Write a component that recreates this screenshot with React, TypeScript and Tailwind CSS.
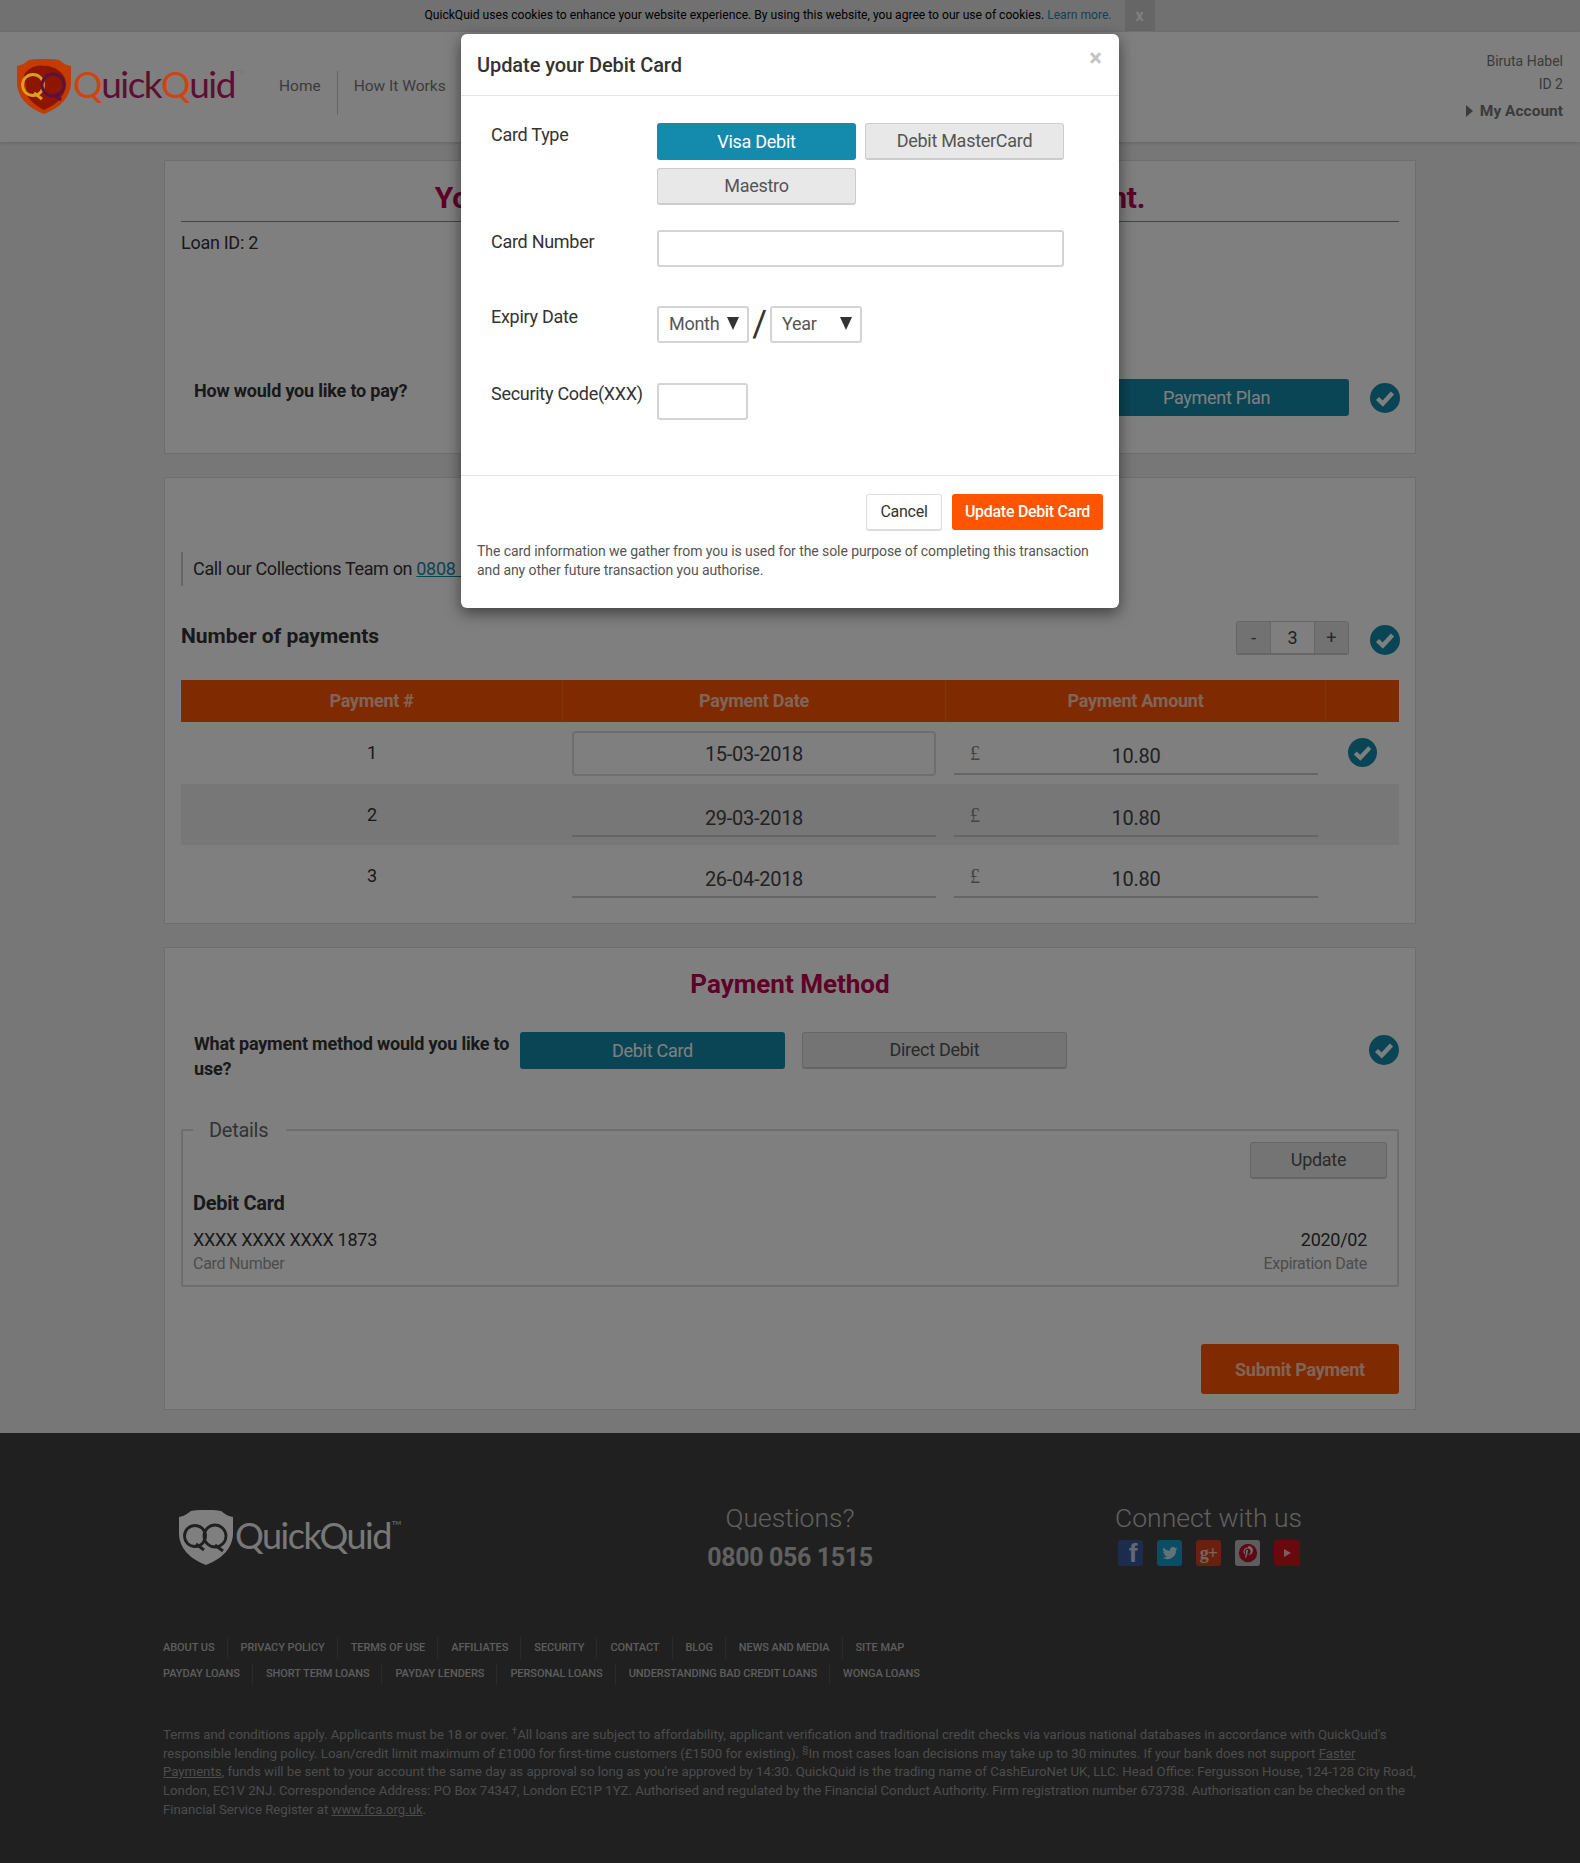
import React from "react";

const font = { fontFamily: "Roboto, sans-serif" };

function Check({ className }: { className: string }) {
  return (
    <svg viewBox="0 0 30 30" className={className}>
      <circle cx="15" cy="15" r="15" fill="#148aac" />
      <path d="M7.5 15.5 L12.8 20.5 L22.5 10" fill="none" stroke="#ffffff" strokeWidth="4.4" />
    </svg>
  );
}

function Shield({ mono }: { mono?: boolean }) {
  const body = mono ? "#ffffff" : "#c43c02";
  const shade = mono ? "#ffffff" : "#8e1500";
  const q1 = mono ? "#404040" : "#d8a020";
  const q2 = mono ? "#404040" : "#5a1040";
  return (
    <svg viewBox="0 0 56 56" className="h-[56px] w-[56px] shrink-0">
      <path d="M1 7 C7 6 10 3 13 1 C22 -0.5 34 -0.5 43 1 C46 3 49 6 55 7 L55 23 C55 38 44 49 28 55 C12 49 1 38 1 23 Z" fill={body} />
      <path d="M8 16 C12 8 22 5 32 7 C42 9 49 15 50 24 C50 36 42 45 28 51 C20 47 14 42 11 36 Z" fill={shade} />
      <circle cx="17" cy="26" r="10.500" fill="none" stroke={q1} strokeWidth="2.800" />
      <path d="M18 34 L26 40" stroke={q1} strokeWidth="3" />
      <circle cx="37" cy="26" r="11" fill="none" stroke={q2} strokeWidth="2.800" />
      <path d="M37 35 L45 41" stroke={q2} strokeWidth="3" />
    </svg>
  );
}

function Logo() {
  return (
    <div className="flex w-[224px] items-start" style={{ fontFamily: "Lato, sans-serif" }}>
      <Shield />
      <div className="ml-[1px] flex text-[37px] leading-[50px] tracking-[-1.500px]">
        <span className="text-[#cf4510]">Q</span>
        <span className="text-[#5c0f33]">uick</span>
        <span className="text-[#cf4510]">Q</span>
        <span className="text-[#5c0f33]">uid</span>
        <span className="mt-[-12px] ml-[1px] text-[6px] tracking-normal text-[#777]">TM</span>
      </div>
    </div>
  );
}

function Gray({ children, className }: { children: React.ReactNode; className: string }) {
  return (
    <button className={`rounded-[3px] border border-[#ccc] border-b-2 bg-[#e8e8e8] pb-[1px] text-[18px] text-[#555] ${className}`}>
      {children}
    </button>
  );
}

function Teal({ children, className }: { children: React.ReactNode; className: string }) {
  return (
    <button className={`rounded-[3px] bg-[#148aac] pb-[1px] text-[18px] text-white ${className}`}>{children}</button>
  );
}

function AmountCell() {
  return (
    <div className="relative ml-2 mt-[9px] flex h-[44px] w-[364px] items-end justify-center border-b-2 border-[#ccc] pb-[2px] text-[20px] text-[#444]">
      <span className="absolute left-[16px] top-[7px] text-[20px] text-[#888]" style={{ fontFamily: "Liberation Serif, serif" }}>£</span>
      10.80
    </div>
  );
}

const rows = [
  { n: 1, date: "15-03-2018" },
  { n: 2, date: "29-03-2018" },
  { n: 3, date: "26-04-2018" },
];

const nav1 = ["About Us", "Privacy Policy", "Terms of Use", "Affiliates", "Security", "Contact", "Blog", "News and Media", "Site Map"];
const nav2 = ["Payday Loans", "Short Term Loans", "Payday Lenders", "Personal Loans", "Understanding Bad Credit Loans", "Wonga Loans"];

function FooterNav({ items, className }: { items: string[]; className: string }) {
  return (
    <ul className={`flex items-center text-[11px] font-medium uppercase text-[#bbb] ${className}`}>
      {items.map((t, i) => (
        <li
          key={t}
          className={`flex h-[22px] items-center ${i < items.length - 1 ? "mr-[13px] border-r border-[#555] pr-[12px]" : ""}`}
        >
          {t}
        </li>
      ))}
    </ul>
  );
}

function Social() {
  return (
    <div className="mt-[7px] flex justify-between">
      <div className="flex h-[26px] w-[25px] items-end justify-center rounded-[3px] bg-[#3b5998] pl-[5px]">
        <span className="text-[26px] leading-[26px] font-bold text-[#c8d0e4]" style={{ fontFamily: "Liberation Sans, sans-serif" }}>f</span>
      </div>
      <div className="flex h-[26px] w-[25px] items-center justify-center rounded-[3px] bg-[#1a9ac9]">
        <svg viewBox="0 0 24 24" className="h-[18px] w-[18px]" fill="#c8e4f0">
          <path d="M22 5.9c-.7.3-1.5.5-2.4.6.9-.5 1.5-1.3 1.8-2.3-.8.5-1.7.8-2.6 1a4.1 4.1 0 0 0-7 3.7C8.400 8.700 5.400 7.100 3.400 4.600a4.100 4.100 0 0 0 1.300 5.500c-.7 0-1.300-.2-1.900-.5 0 2 1.400 3.700 3.300 4.100-.6.2-1.200.2-1.900.1.500 1.600 2 2.800 3.800 2.900A8.300 8.300 0 0 1 2 18.400 11.700 11.700 0 0 0 20 8c.8-.6 1.500-1.300 2-2.100z" />
        </svg>
      </div>
      <div className="flex h-[26px] w-[25px] items-center justify-center rounded-[3px] bg-[#d2431f]">
        <span className="text-[18px] leading-[22px] font-bold tracking-[-1px] text-[#f0c8b8]" style={{ fontFamily: "Liberation Serif, serif" }}>g+</span>
      </div>
      <div className="flex h-[26px] w-[25px] items-center justify-center rounded-[3px] bg-[#bbb]">
        <svg viewBox="0 0 24 24" className="h-[20px] w-[20px]">
          <circle cx="12" cy="12" r="11" fill="#b8142a" />
          <path d="M12 5.500c-3.600 0-5.500 2.300-5.500 4.800 0 1.200.6 2.600 1.700 3.100.3.100.3 0 .5-.8 0-.2 0-.3-.1-.5-.4-.5-.7-1.100-.7-1.900 0-2 1.500-3.700 3.900-3.700 2.100 0 3.300 1.300 3.300 3 0 2.300-1 4.200-2.500 4.200-.8 0-1.400-.7-1.300-1.500.2-1 .7-2.100.7-2.800 0-.6-.3-1.200-1-1.200-.8 0-1.500.9-1.500 2 0 .7.3 1.200.3 1.200l-1 4.200c-.2.900 0 2.500 0 2.700 0 .1.100.1.200.1.100-.1 1.200-1.500 1.600-2.900l.6-2.400c.3.600 1.200 1.100 2.100 1.100 2.800 0 4.600-2.500 4.600-5.900 0-2.500-2.200-4.800-5.500-4.800z" fill="#ddd" />
        </svg>
      </div>
      <div className="flex h-[26px] w-[26px] items-center justify-center rounded-[3px] bg-[#d0121b]">
        <svg viewBox="0 0 10 10" className="h-[10px] w-[10px]">
          <path d="M2 1 L9 5 L2 9 Z" fill="#eec0c0" />
        </svg>
      </div>
    </div>
  );
}

export default function App() {
  return (
    <div className="relative min-h-[1863px] w-[1580px] bg-[#eeeeee] tracking-[-0.28px] text-[#333]" style={font}>
      {/* cookie bar */}
      <div className="flex h-[32px] justify-center bg-[#e2e2e2] pr-[1px] text-[12.100px] leading-[31px] tracking-normal text-black">
        <span>
          QuickQuid uses cookies to enhance your website experience. By using this website, you agree to our use of cookies.{" "}
          <span className="text-[#148aac]">Learn more.</span>
        </span>
        <span className="ml-[13px] flex h-[31px] w-[30px] items-center justify-center bg-[#cccccc] text-[16px] font-bold text-white">x</span>
      </div>

      {/* header */}
      <header className="flex h-[110px] items-start justify-between bg-white pr-[17px] tracking-normal shadow-[0_1px_3px_rgba(0,0,0,0.15)]">
        <div className="flex">
          <div className="relative z-50 mt-[27px] ml-[16px]">
            <Logo />
          </div>
          <nav className="ml-[39px] mt-[39px] flex text-[15.500px] leading-[31px] text-[#777]">
            <span className="border-r border-[#ccc] pr-[16px]">Home</span>
            <span className="pl-[16px]">How It Works</span>
          </nav>
        </div>
        <div className="mt-[17px] text-right text-[#777]">
          <div className="text-[14px] leading-[24px]">Biruta Habel</div>
          <div className="text-[14px] leading-[23px]">ID 2</div>
          <div className="mt-[2px] flex items-center justify-end text-[15.500px] leading-[26px] font-bold">
            <span className="mr-[7px] h-0 w-0 border-y-[6px] border-l-[7px] border-y-transparent border-l-[#777]" />
            My Account
          </div>
        </div>
      </header>

      <main className="ml-[164px] flex w-[1252px] flex-col pt-[18px]">
        {/* summary */}
        <section className="h-[294px] border border-[#dddddd] bg-white px-[16px]">
          <h1 className="h-[61px] border-b border-[#888] pt-[19px] text-center text-[30px] leading-[36px] font-bold whitespace-nowrap text-[#bc0050]">
            Your loan is now overdue, set up your new repayment.
          </h1>
          <div className="mt-[9px] text-[18px] leading-[24px]">Loan ID: 2</div>
          <div className="mt-[124px] flex items-start">
            <div className="ml-[13px] text-[18px] leading-[24px] font-bold tracking-[-0.2px]">How would you like to pay?</div>
            <Teal className="ml-auto h-[37px] w-[265px]">Payment Plan</Teal>
            <Check className="-mr-[1px] ml-[21px] mt-[4px] h-[30px] w-[30px]" />
          </div>
        </section>

        {/* payment schedule */}
        <section className="mt-[23px] h-[447px] border border-[#dddddd] bg-white px-[16px]">
          <div className="mt-[74px] h-[34px] border-l-2 border-[#ccc] pl-[10px] text-[18px] leading-[34px] tracking-[-0.34px]">
            Call our Collections Team on <span className="text-[#148aac] underline">0808 168 5750</span>
          </div>
          <div className="mt-[35px] flex items-start justify-between">
            <div className="pt-[1px] text-[21px] leading-[28px] font-bold tracking-normal">Number of payments</div>
            <div className="flex items-start">
              <div className="flex h-[34px] w-[113px] overflow-hidden rounded-[3px] border border-[#ccc] border-b-2 text-[18px]">
                <span className="flex w-[34px] items-center justify-center bg-[#e4e4e4] text-[#555]">-</span>
                <span className="flex w-[45px] items-center justify-center border-x border-[#ccc] text-[#444]">3</span>
                <span className="flex w-[34px] items-center justify-center bg-[#e4e4e4] text-[#555]">+</span>
              </div>
              <Check className="-mr-[1px] ml-[21px] mt-[4px] h-[30px] w-[30px]" />
            </div>
          </div>
          <div className="mt-[25px] grid h-[42px] grid-cols-[382px_383px_380px_73px] items-center bg-[#ff5500] text-center text-[18px] font-bold text-white/70">
            <div className="flex h-full items-center justify-center border-r border-[#ff6a1f] pb-[1px]">Payment #</div>
            <div className="flex h-full items-center justify-center border-r border-[#ff6a1f] pb-[1px]">Payment Date</div>
            <div className="flex h-full items-center justify-center border-r border-[#ff6a1f] pb-[1px]">Payment Amount</div>
            <div />
          </div>
          {rows.map((r) => (
            <div
              key={r.n}
              className={`grid h-[61.5px] grid-cols-[382px_383px_380px_73px] ${r.n === 2 ? "bg-[#eeeeee]" : ""}`}
            >
              <div className="pt-[19px] text-center text-[18px] leading-[24px]">{r.n}</div>
              {r.n === 1 ? (
                <div className="ml-[9px] mt-[9px] flex h-[45px] w-[364px] items-center justify-center rounded-[4px] border-2 border-[#dcdcdc] text-[20px] text-[#444]">
                  {r.date}
                </div>
              ) : (
                <div className="ml-[9px] mt-[9px] flex h-[44px] w-[364px] items-end justify-center border-b-2 border-[#ccc] pb-[2px] text-[20px] text-[#444]">
                  {r.date}
                </div>
              )}
              <AmountCell />
              {r.n === 1 ? <Check className="ml-[22px] mt-[16px] h-[29px] w-[29px]" /> : <div />}
            </div>
          ))}
        </section>

        {/* payment method */}
        <section className="mt-[23px] h-[463px] border border-[#dddddd] bg-white px-[16px]">
          <h2 className="mt-[19px] text-center text-[26px] leading-[34px] font-bold tracking-normal text-[#bc0050]">Payment Method</h2>
          <div className="mt-[31px] flex items-start">
            <div className="-mt-[1px] ml-[13px] w-[327px] text-[18px] leading-[25px] font-bold tracking-[-0.2px]">What payment method would you like to use?</div>
            <Teal className="h-[37px] w-[265px]">Debit Card</Teal>
            <Gray className="ml-[17px] h-[37px] w-[266px]">Direct Debit</Gray>
            <Check className="ml-[302px] mt-[3px] h-[30px] w-[30px]" />
          </div>
          <fieldset className="mt-[37px] h-[169px] rounded-[2px] border-2 border-[#dcdcdc] px-[10px]">
            <legend className="pl-[16px] pr-[18px] text-[20px] leading-[24px] text-[#666]">Details</legend>
            <div className="flex justify-end">
              <Gray className="h-[37px] w-[137px]">Update</Gray>
            </div>
            <div className="mt-[12px] text-[20px] leading-[24px] font-bold">Debit Card</div>
            <div className="mt-[13px] flex justify-between pr-[20px] text-[18px] leading-[24px]">
              <span>XXXX XXXX XXXX 1873</span>
              <span>2020/02</span>
            </div>
            <div className="flex justify-between pr-[20px] text-[16px] leading-[24px] text-[#999]">
              <span>Card Number</span>
              <span>Expiration Date</span>
            </div>
          </fieldset>
          <div className="mt-[57px] flex justify-end">
            <button className="h-[50px] w-[198px] rounded-[3px] bg-[#ff5500] text-[18px] font-bold text-white/70">Submit Payment</button>
          </div>
        </section>
      </main>

      {/* footer */}
      <footer className="mt-[23px] h-[430px] bg-[#404040] px-[163px] pt-[74px] tracking-normal text-[#c0c0c0]">
        <div className="relative flex h-[130px]">
          <div className="mt-[3px] ml-[15px] flex" style={{ fontFamily: "Lato, sans-serif" }}>
            <Shield mono />
            <div className="ml-[1px] flex text-[36px] leading-[50px] tracking-[-1.500px] text-[#f0f0f0]">
              QuickQuid<span className="mt-[-12px] ml-[1px] text-[6px] tracking-normal">TM</span>
            </div>
          </div>
          <div className="absolute left-[427px] top-[-4px] w-[400px] text-center">
            <div className="text-[26.500px] leading-[30px] font-light">Questions?</div>
            <div className="mt-[8px] text-[25px] leading-[34px] font-bold tracking-[-0.35px]">0800 056 1515</div>
          </div>
          <div className="absolute left-[955px] top-[-4px] w-[182px]">
            <div className="-ml-[3px] text-[26.500px] leading-[30px] font-light whitespace-nowrap">Connect with us</div>
            <Social />
          </div>
        </div>
        <FooterNav items={nav1} className="tracking-[-0.07px]" />
        <FooterNav items={nav2} className="mt-[4px] tracking-[-0.06px]" />
        <p className="mt-[41px] w-[1254px] text-[13.200px] leading-[18.700px] text-[#999]">
          Terms and conditions apply. Applicants must be 18 or over. <sup>†</sup>All loans are subject to affordability, applicant verification and traditional credit checks via various national databases in accordance with QuickQuid's responsible lending policy. Loan/credit limit maximum of £1000 for first-time customers (£1500 for existing). <sup>§</sup>In most cases loan decisions may take up to 30 minutes. If your bank does not support <span className="underline">Faster Payments</span>, funds will be sent to your account the same day as approval so long as you're approved by 14:30. QuickQuid is the trading name of CashEuroNet UK, LLC. Head Office: Fergusson House, 124-128 City Road, London, EC1V 2NJ. Correspondence Address: PO Box 74347, London EC1P 1YZ. Authorised and regulated by the Financial Conduct Authority. Firm registration number 673738. Authorisation can be checked on the Financial Service Register at <span className="underline">www.fca.org.uk</span>.
        </p>
      </footer>

      {/* dimming layer */}
      <div className="absolute inset-0 z-40 bg-black/50" />

      {/* modal */}
      <div className="absolute top-[34px] left-[461px] z-[60] h-[574px] w-[658px] rounded-[6px] bg-white shadow-[0_5px_15px_rgba(0,0,0,0.5)]">
        <div className="relative h-[62px] border-b border-[#e5e5e5] pl-[16px] pt-[18px] text-[20px] leading-[26px] font-medium tracking-[-0.08px] text-[#333]">
          Update your Debit Card
          <span className="absolute top-[14px] right-[17px] text-[24px] leading-[21px] font-bold text-[#c4c4c4]">×</span>
        </div>
        <div className="h-[380px] border-b border-[#e5e5e5] pl-[30px] text-[18px] text-[#333]">
          <div className="flex pt-[27px]">
            <div className="w-[166px] leading-[24px]">Card Type</div>
            <div className="grid w-[406px] grid-cols-[199px_199px] gap-x-[9px] gap-y-[8px]">
              <Teal className="h-[37px]">Visa Debit</Teal>
              <Gray className="h-[37px]">Debit MasterCard</Gray>
              <Gray className="h-[37px]">Maestro</Gray>
            </div>
          </div>
          <div className="mt-[25px] flex">
            <div className="w-[166px] leading-[24px]">Card Number</div>
            <div className="h-[37px] w-[407px] rounded-[3px] border-2 border-[#d4d4d4]" />
          </div>
          <div className="mt-[39px] flex">
            <div className="-mt-[1px] w-[166px] leading-[24px]">Expiry Date</div>
            <div className="flex items-center">
              <div className="flex h-[37px] w-[92px] items-center justify-between rounded-[3px] border-2 border-[#d4d4d4] pb-[2px] pl-[10px] pr-[8px] text-[#555]">
                Month<span className="h-0 w-0 border-x-[6px] border-t-[13px] border-x-transparent border-t-[#333]" />
              </div>
              <span className="w-[21px] text-center text-[36px] leading-[37px] text-[#333]">/</span>
              <div className="flex h-[37px] w-[92px] items-center justify-between rounded-[3px] border-2 border-[#d4d4d4] pb-[2px] pl-[10px] pr-[8px] text-[#555]">
                Year<span className="h-0 w-0 border-x-[6px] border-t-[13px] border-x-transparent border-t-[#333]" />
              </div>
            </div>
          </div>
          <div className="mt-[40px] flex">
            <div className="-mt-[1px] w-[166px] whitespace-nowrap leading-[24px]">Security Code(XXX)</div>
            <div className="h-[37px] w-[91px] rounded-[3px] border-2 border-[#d4d4d4]" />
          </div>
        </div>
        <div className="flex justify-end pr-[16px] pt-[18px]">
          <button className="h-[37px] w-[76px] rounded-[3px] border border-[#ddd] border-b-2 text-[16px] text-[#333]">Cancel</button>
          <button className="ml-[10px] h-[36px] w-[151px] rounded-[3px] bg-[#ff5500] text-[16px] font-medium text-white">Update Debit Card</button>
        </div>
        <p className="mt-[11px] pl-[16px] pr-[20px] text-[14px] leading-[19px] tracking-[-0.08px] text-[#555]">
          The card information we gather from you is used for the sole purpose of completing this transaction and any other future transaction you authorise.
        </p>
      </div>
    </div>
  );
}
